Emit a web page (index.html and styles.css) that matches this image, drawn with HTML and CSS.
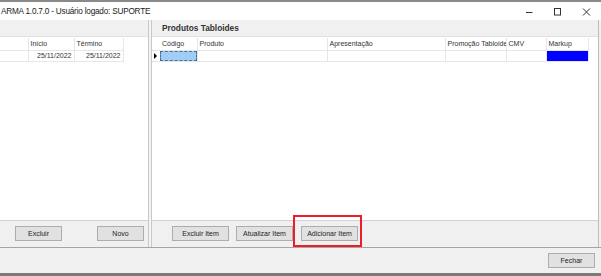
FILE: index.html
```html
<!DOCTYPE html>
<html>
<head>
    <title>ARMA - Produtos Tabloides</title>
    <link rel="stylesheet" href="styles.css">
</head>
<body>
    <div class="window">
        <!-- Title bar -->
        <div class="titlebar">
            <span class="title">ARMA 1.0.7.0 - Usuário logado: SUPORTE</span>
            <div class="controls">
                <svg width="29" height="18" viewBox="0 0 29 18"><path d="M12 10.5h6.5" stroke="#333" stroke-width="1"/></svg>
                <svg width="29" height="18" viewBox="0 0 29 18"><rect x="11.5" y="6.5" width="6" height="6.5" fill="none" stroke="#333" stroke-width="1"/></svg>
                <svg width="29" height="18" viewBox="0 0 29 18"><path d="M11 6.5l7 7M18 6.5l-7 7" stroke="#333" stroke-width="1"/></svg>
            </div>
        </div>

        <div class="main">
            <!-- Left panel: tabloides list -->
            <div class="panel left">
                <div class="panel-head"></div>
                <div class="grid-area">
                    <table class="grid grid-left">
                        <colgroup>
                            <col style="width: 28px">
                            <col style="width: 46px">
                            <col style="width: 49px">
                        </colgroup>
                        <tr class="head">
                            <td></td>
                            <td>Início</td>
                            <td>Término</td>
                        </tr>
                        <tr>
                            <td></td>
                            <td class="num">25/11/2022</td>
                            <td class="num">25/11/2022</td>
                        </tr>
                    </table>
                </div>
                <div class="panel-foot foot-left">
                    <button class="btn btn-sm">Excluir</button>
                    <button class="btn btn-sm">Novo</button>
                </div>
            </div>

            <div class="splitter"></div>

            <!-- Right panel: produtos -->
            <div class="panel right">
                <div class="panel-head">Produtos Tabloides</div>
                <div class="grid-area">
                    <table class="grid grid-right">
                        <colgroup>
                            <col style="width: 8px">
                            <col style="width: 37px">
                            <col style="width: 130px">
                            <col style="width: 118px">
                            <col style="width: 61px">
                            <col style="width: 40px">
                            <col style="width: 42px">
                        </colgroup>
                        <tr class="head">
                            <td class="indicator"></td>
                            <td>Código</td>
                            <td>Produto</td>
                            <td>Apresentação</td>
                            <td>Promoção Tabloide</td>
                            <td>CMV</td>
                            <td>Markup</td>
                        </tr>
                        <tr>
                            <td class="indicator"><span class="arrow"></span></td>
                            <td><div class="cell-selected"></div></td>
                            <td></td>
                            <td></td>
                            <td></td>
                            <td></td>
                            <td><div class="cell-markup"></div></td>
                        </tr>
                    </table>
                </div>
                <div class="panel-foot foot-right">
                    <button class="btn btn-md">Excluir Item</button>
                    <button class="btn btn-md">Atualizar Item</button>
                    <span class="highlight"><button class="btn btn-md">Adicionar Item</button></span>
                </div>
            </div>
        </div>

        <!-- Bottom bar -->
        <div class="footer">
            <button class="btn btn-sm">Fechar</button>
        </div>
    </div>
</body>
</html>
```

FILE: styles.css
```css
/* Window frame */
body {
    margin: 0;
    padding: 0;
    background-color: #f0f0f0;
    font-family: 'Liberation Sans', Arial, sans-serif;
    color: #222;
}
.window {
    width: 601px;
    height: 276px;
    display: flex;
    flex-direction: column;
    border-top: 2px solid #8a8a8a;
    border-bottom: 3px solid #7a7a7a;
    box-sizing: border-box;
    background-color: #f0f0f0;
    overflow: hidden;
}

/* Title bar */
.titlebar {
    height: 18px;
    background-color: #fff;
    display: flex;
    align-items: center;
    justify-content: space-between;
    flex-shrink: 0;
}
.title {
    font-size: 8.2px;
    letter-spacing: -0.2px;
    padding-left: 1px;
    color: #1a1a1a;
}
.controls {
    display: flex;
}
.controls svg {
    display: block;
}

/* Main split area */
.main {
    height: 227px;
    display: flex;
    flex-shrink: 0;
    border-bottom: 1px solid #a5a5a5;
}
.panel {
    display: flex;
    flex-direction: column;
}
.panel.left {
    width: 148px;
}
.panel.right {
    width: 446px;
    border-right: 1px solid #bcbcbc;
}
.splitter {
    width: 2px;
    background-color: #f4f4f4;
    border-left: 1px solid #c8c8c8;
    border-right: 1px solid #c8c8c8;
}
.panel-head {
    height: 17px;
    line-height: 17px;
    font-size: 8.3px;
    font-weight: bold;
    padding-left: 10px;
    color: #333;
    border-bottom: 1px solid #e2e2e2;
    box-sizing: border-box;
}
.grid-area {
    height: 183px;
    background-color: #fff;
    box-sizing: border-box;
    padding-top: 1px;
}
.panel-foot {
    height: 27px;
    border-top: 1px solid #d2d2d2;
    display: flex;
    align-items: center;
    box-sizing: border-box;
    padding-bottom: 1px;
}
.foot-left {
    justify-content: space-between;
    padding-left: 15px;
    padding-right: 4px;
}
.foot-right {
    padding-left: 20px;
    gap: 7px;
}

/* Grids */
.grid {
    border-collapse: collapse;
    table-layout: fixed;
    font-size: 7px;
    color: #333;
}
.grid td {
    height: 11px;
    padding: 0 2px;
    border-right: 1px solid #e6e6e6;
    border-bottom: 1px solid #e6e6e6;
    white-space: nowrap;
    overflow: hidden;
    box-sizing: border-box;
}
.grid tr.head td {
    height: 12px;
    padding-top: 2px;
    vertical-align: top;
}
.grid td.num {
    text-align: right;
}
.grid-left {
    width: 123px;
}
.grid-right {
    width: 436px;
}
.grid td.indicator {
    padding: 0;
    border-right: none;
}
.arrow {
    display: block;
    width: 0;
    height: 0;
    margin-left: 2px;
    border-top: 3px solid transparent;
    border-bottom: 3px solid transparent;
    border-left: 3px solid #000;
}
.grid td:has(.cell-selected),
.grid td:has(.cell-markup) {
    padding: 0;
}
.cell-selected {
    height: 10px;
    background-color: #9fcdf8;
    border: 1px dashed #4d6f92;
    box-sizing: border-box;
}
.cell-markup {
    height: 10px;
    background-color: #0000ff;
}

/* Buttons */
.btn {
    font-family: 'Liberation Sans', Arial, sans-serif;
    font-size: 7px;
    color: #222;
    background-color: #e1e1e1;
    border: 1px solid #adadad;
    height: 15px;
    padding: 0;
    margin: 0;
}
.btn-sm {
    width: 47px;
}
.btn-md {
    width: 57px;
}

/* Red annotation box round the add button */
.highlight {
    position: relative;
    display: flex;
    margin-left: 1px;
}
.highlight::after {
    content: '';
    position: absolute;
    left: -8px;
    right: -4px;
    top: -11px;
    bottom: -6px;
    border: 2px solid #ee1c25;
}

/* Bottom bar */
.footer {
    flex: 1;
    display: flex;
    justify-content: flex-end;
    align-items: center;
    padding-right: 6px;
}
```
